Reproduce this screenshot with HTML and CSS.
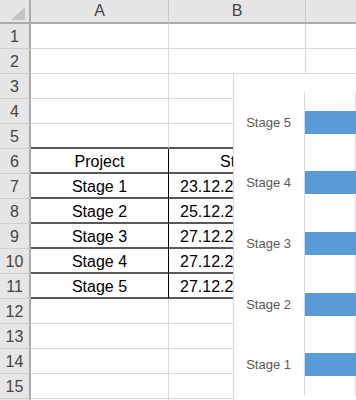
FILE: index.html
```html
<!DOCTYPE html>
<html lang="en">
<head>
  <meta charset="UTF-8" />
  <meta name="viewport" content="width=device-width, initial-scale=1.0"/>
  <title>Gantt sheet</title>
  <link rel="stylesheet" href="styles.css">
</head>
<body>
  <div class="wrap">
    <div class="sheet">
      <div class="hd corner">
        <svg width="16" height="14" viewBox="0 0 16 14"><polygon points="15,0 15,13 1,13" fill="#c4c4c4"/></svg>
      </div>
      <div class="hd">A</div>
      <div class="hd">B</div>
      <div class="hd"></div>

      <div class="rh">1</div><div class="c"></div><div class="c"></div><div class="c"></div>
      <div class="rh">2</div><div class="c"></div><div class="c"></div><div class="c"></div>
      <div class="rh">3</div><div class="c"></div><div class="c"></div><div class="c"></div>
      <div class="rh">4</div><div class="c"></div><div class="c"></div><div class="c"></div>
      <div class="rh">5</div><div class="c edge"></div><div class="c edge"></div><div class="c"></div>

      <div class="rh">6</div><div class="c t ta">Project</div><div class="c t mid">Start</div><div class="c"></div>
      <div class="rh">7</div><div class="c t ta">Stage 1</div><div class="c t date">23.12.2021</div><div class="c"></div>
      <div class="rh">8</div><div class="c t ta">Stage 2</div><div class="c t date">25.12.2021</div><div class="c"></div>
      <div class="rh">9</div><div class="c t ta">Stage 3</div><div class="c t date">27.12.2021</div><div class="c"></div>
      <div class="rh">10</div><div class="c t ta">Stage 4</div><div class="c t date">27.12.2021</div><div class="c"></div>
      <div class="rh">11</div><div class="c t ta">Stage 5</div><div class="c t date">27.12.2021</div><div class="c"></div>

      <div class="rh">12</div><div class="c"></div><div class="c"></div><div class="c"></div>
      <div class="rh">13</div><div class="c"></div><div class="c"></div><div class="c"></div>
      <div class="rh">14</div><div class="c"></div><div class="c"></div><div class="c"></div>
      <div class="rh">15</div><div class="c"></div><div class="c"></div><div class="c"></div>
      <div class="rh"></div><div class="c"></div><div class="c"></div><div class="c"></div>
    </div>

    <div class="chart">
      <div class="plot">
        <div class="cat"><span class="lbl">Stage 5</span><div class="track"><div class="bar"></div></div></div>
        <div class="cat"><span class="lbl">Stage 4</span><div class="track"><div class="bar"></div></div></div>
        <div class="cat"><span class="lbl">Stage 3</span><div class="track"><div class="bar"></div></div></div>
        <div class="cat"><span class="lbl">Stage 2</span><div class="track"><div class="bar"></div></div></div>
        <div class="cat"><span class="lbl">Stage 1</span><div class="track"><div class="bar"></div></div></div>
      </div>
    </div>
  </div>
</body>
</html>
```

FILE: styles.css
```css
body {
  margin: 0; background: #fff;
  font-family: 'Liberation Sans', Arial, sans-serif;
  overflow: hidden;
}
.wrap {
  position: relative;
  width: 356px; height: 400px;
  overflow: hidden;
}
.sheet {
  display: grid;
  grid-template-columns: 31px 138px 137px 80px;
  grid-template-rows: 24px;
  grid-auto-rows: 25px;
  font-size: 16px; color: #000;
}
.hd {
  box-sizing: border-box;
  background: #e6e6e6; color: #444;
  border-bottom: 2px solid #ababab;
  border-right: 1px solid #c6c6c6;
  text-align: center; line-height: 20px;
  padding-top: 1px;
}
.corner {
  border-right: 2px solid #ababab;
  display: flex; align-items: flex-start; justify-content: flex-end;
  padding: 7px 3px 0 0;
}
.rh {
  box-sizing: border-box;
  background: #e6e6e6; color: #444;
  border-right: 2px solid #ababab;
  border-bottom: 1px solid #cfcfcf;
  text-align: center;
  padding-top: 3px; line-height: 20px;
}
.c {
  box-sizing: border-box;
  border-right: 1px solid #dadada;
  border-bottom: 1px solid #dadada;
  padding-top: 3px; line-height: 20px;
  white-space: nowrap; overflow: hidden;
}
.edge, .t { border-bottom: 2px solid #595959; }
.ta { border-right: 1px solid #000; text-align: center; }
.mid { text-align: center; }
.date { padding-left: 11px; }

.chart {
  position: absolute; left: 233px; top: 73px;
  width: 160px; height: 360px;
  background: #fff;
  border: 1px solid #d9d9d9;
  padding-top: 18px;
}
.plot {
  display: flex; flex-direction: column;
  height: 303px;
}
.cat {
  flex: 1;
  display: flex; align-items: stretch;
}
.lbl {
  width: 57px; padding-right: 13px;
  display: flex; align-items: center; justify-content: flex-end;
  font-size: 13px; color: #595959;
}
.track {
  flex: 1;
  display: flex; align-items: center;
  background-image: linear-gradient(to right, #d9d9d9 1px, transparent 1px);
  background-size: 51px 100%;
}
.bar {
  flex: 1; margin-left: 1px;
  height: 23px; background: #5b9bd5;
}
```
